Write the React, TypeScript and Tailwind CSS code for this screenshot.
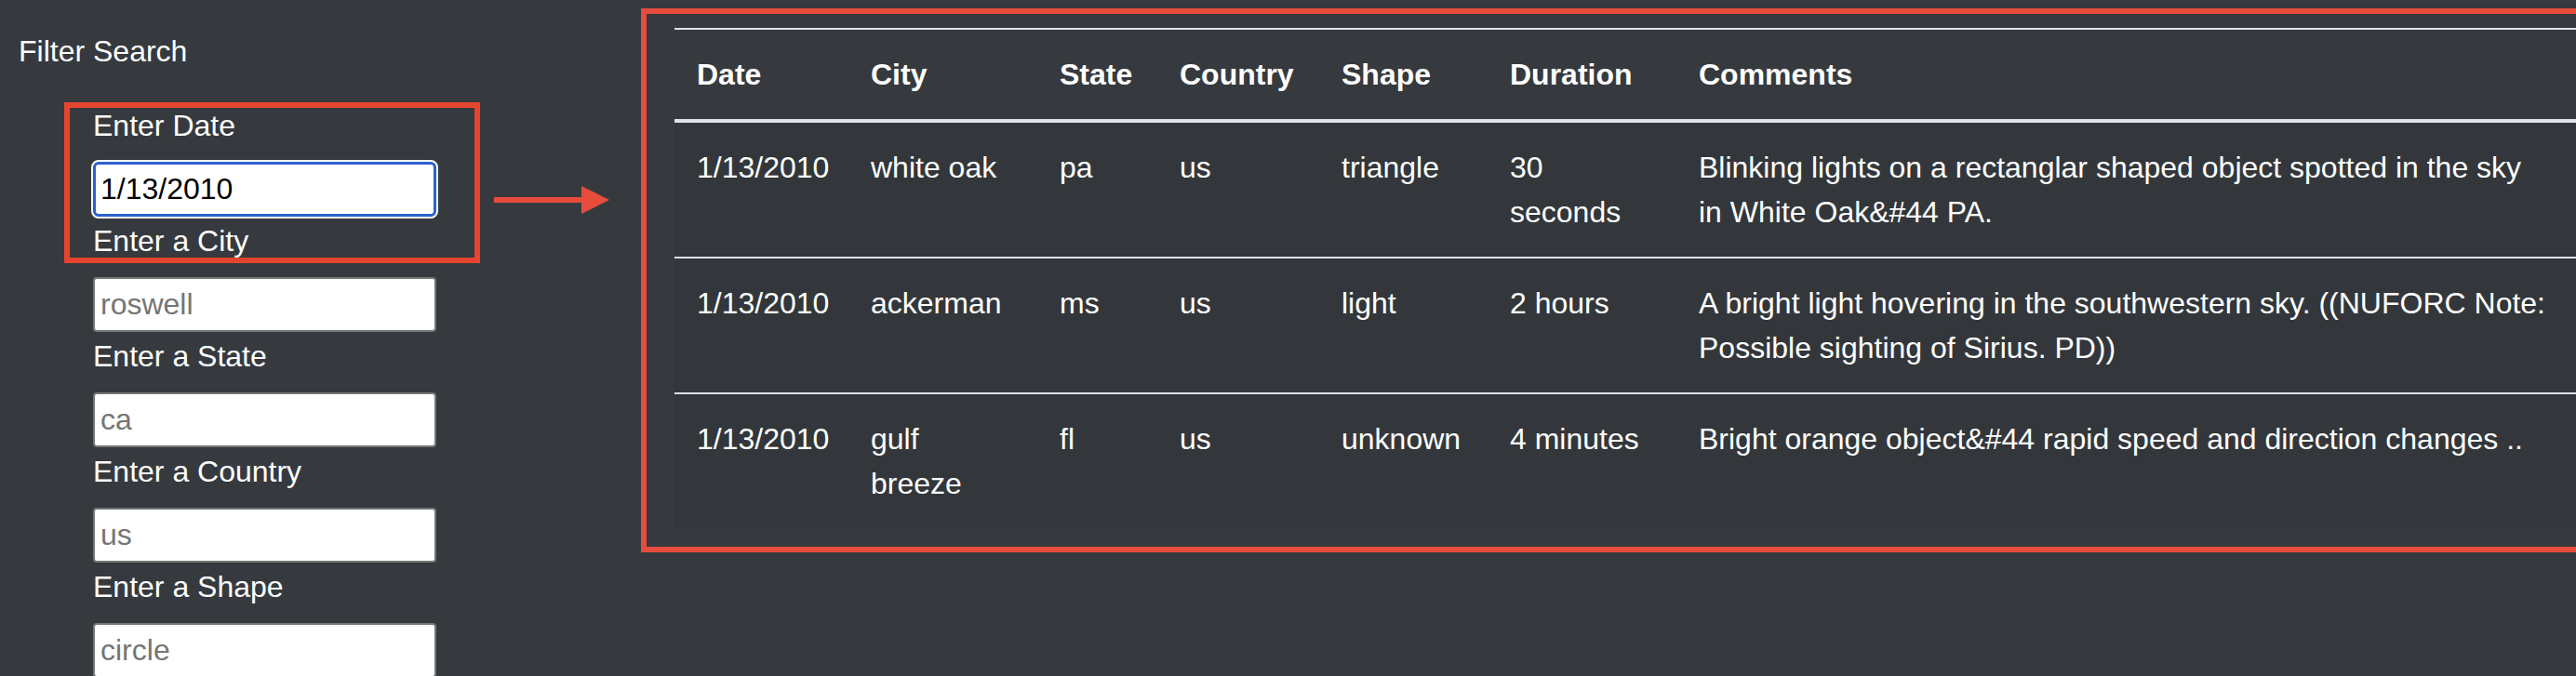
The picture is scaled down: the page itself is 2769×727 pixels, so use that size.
import React from 'react';

type Sighting = {
  date: string;
  city: string;
  state: string;
  country: string;
  shape: string;
  duration: string;
  comments: string;
};

const sightings: Sighting[] = [
  {
    date: '1/13/2010',
    city: 'white oak',
    state: 'pa',
    country: 'us',
    shape: 'triangle',
    duration: '30 seconds',
    comments: 'Blinking lights on a rectanglar shaped object spotted in the sky in White Oak&#44 PA.',
  },
  {
    date: '1/13/2010',
    city: 'ackerman',
    state: 'ms',
    country: 'us',
    shape: 'light',
    duration: '2 hours',
    comments: 'A bright light hovering in the southwestern sky. ((NUFORC Note: Possible sighting of Sirius. PD))',
  },
  {
    date: '1/13/2010',
    city: 'gulf breeze',
    state: 'fl',
    country: 'us',
    shape: 'unknown',
    duration: '4 minutes',
    comments: 'Bright orange object&#44 rapid speed and direction changes ..',
  },
];

const filters = [
  { label: 'Enter a City', placeholder: 'roswell' },
  { label: 'Enter a State', placeholder: 'ca' },
  { label: 'Enter a Country', placeholder: 'us' },
  { label: 'Enter a Shape', placeholder: 'circle' },
];

const headers = ['Date', 'City', 'State', 'Country', 'Shape', 'Duration', 'Comments'];
// column widths measured off the screenshot; the last one runs past the window edge
const colWidths = ['w-[187px]', 'w-[203px]', 'w-[129px]', 'w-[174px]', 'w-[181px]', 'w-[203px]', 'w-[1000px]'];
const cellPad = (i: number) => (i === headers.length - 1 ? 'py-6 pl-6 pr-[65px]' : 'p-6');

export default function App() {
  return (
    <div
      className="relative flex w-[2769px] h-[727px] overflow-hidden bg-[#363a3f] text-white text-[32px] leading-[48px]"
      style={{ fontFamily: '"Liberation Sans", Arial, sans-serif' }}
    >
      {/* sidebar filters */}
      <aside className="w-[689px] shrink-0 pt-[31px] pl-[20px]">
        <h4>Filter Search</h4>
        <form className="mt-[32px] pl-[80px]">
          <label className="block mb-[15px]">Enter Date</label>
          <input
            type="text"
            defaultValue="1/13/2010"
            className="block w-[369px] h-[59px] px-[5px] bg-white text-black border-[3px] border-[#2b60cf] rounded-[6px] outline-2 outline-white"
          />
          {filters.map((f) => (
            <div key={f.label}>
              <label className="block mt-[2px] mb-[15px]">{f.label}</label>
              <input
                type="text"
                placeholder={f.placeholder}
                className="block w-[369px] h-[59px] px-[6px] bg-white text-black border-2 border-[#767676] rounded-[4px] placeholder:text-[#757575]"
              />
            </div>
          ))}
        </form>
      </aside>

      {/* results table, boxed */}
      <section className="shrink-0 w-[2200px] self-start mt-[9px] border-[6px] border-r-0 border-[#e84c3d] pt-[15px] pl-[30px] pb-[20px]">
        <table className="table-fixed w-[2077px] text-left">
          <thead>
            <tr>
              {headers.map((h, i) => (
                <th key={h} className={`${colWidths[i]} ${cellPad(i)} font-bold align-top border-t-2 border-b-4 border-[#dee2e6]`}>
                  {h}
                </th>
              ))}
            </tr>
          </thead>
          <tbody className="bg-[#33373b]">
            {sightings.map((s, idx) => (
              <tr key={idx}>
                {[s.date, s.city, s.state, s.country, s.shape, s.duration, s.comments].map((v, i) => (
                  <td key={i} className={`${cellPad(i)} align-top border-t-2 border-[#dee2e6]`}>
                    {v}
                  </td>
                ))}
              </tr>
            ))}
          </tbody>
        </table>
      </section>

      {/* annotation: box round the date field and arrow to the table */}
      <div className="absolute left-[69px] top-[110px] w-[447px] h-[173px] border-[6px] border-[#e5452f] pointer-events-none" />
      <svg className="absolute left-[531px] top-[200px]" width="125" height="30" viewBox="0 0 125 30">
        <rect x="0" y="12" width="96" height="6" fill="#e74c3c" />
        <polygon points="94,0 124,15 94,30" fill="#e74c3c" />
      </svg>
    </div>
  );
}
